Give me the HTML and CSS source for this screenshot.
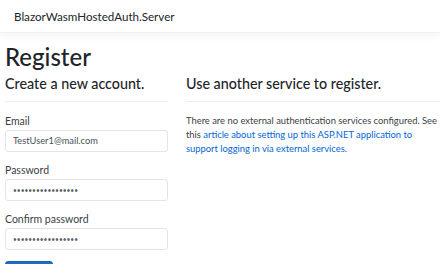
FILE: index.html
```html
<!DOCTYPE html>
<html lang="en">
<head>
    <meta charset="UTF-8">
    <title>Register - BlazorWasmHostedAuth.Server</title>
    <link rel="stylesheet" href="styles.css">
</head>
<body>
    <header class="navbar">
        <a class="navbar-brand" href="#">BlazorWasmHostedAuth.Server</a>
    </header>

    <main class="page">
        <h1>Register</h1>
        <div class="row">
            <!-- Local account form -->
            <section class="col-form">
                <h4>Create a new account.</h4>
                <hr>
                <form>
                    <div class="form-group">
                        <label for="email">Email</label>
                        <input id="email" class="form-control" type="email" value="TestUser1@mail.com">
                    </div>
                    <div class="form-group">
                        <label for="password">Password</label>
                        <input id="password" class="form-control secret" type="password" value="Password123!abcde">
                    </div>
                    <div class="form-group">
                        <label for="confirm">Confirm password</label>
                        <input id="confirm" class="form-control secret" type="password" value="Password123!abcde">
                    </div>
                    <button type="submit" class="btn-primary">Register</button>
                </form>
            </section>

            <!-- External logins -->
            <section class="col-ext">
                <h4>Use another service to register.</h4>
                <hr>
                <p>
                    There are no external authentication services configured. See this
                    <a href="#">article about setting up this ASP.NET application to support logging in via external services</a>.
                </p>
            </section>
        </div>
    </main>
</body>
</html>
```

FILE: styles.css
```css
body {
    margin: 0;
    font-family: Lato, "Open Sans", sans-serif;
    color: #212529;
    background: #fff;
}

.navbar {
    height: 32px;
    display: flex;
    align-items: center;
    padding-left: 14px;
    border-bottom: 1px solid #f1f1f1;
    box-shadow: 0 3px 8px rgba(0, 0, 0, 0.05);
}

.navbar-brand {
    font-size: 11.6px;
    color: #212529;
    text-decoration: none;
}

.page {
    padding: 0 0 0 5px;
    overflow: hidden;
}

h1 {
    font-size: 24px;
    font-weight: 500;
    margin: 10px 0 3px;
    line-height: 1.2;
}

.row {
    display: flex;
    gap: 18px;
}

.col-form {
    width: 163px;
    flex-shrink: 0;
}

.col-ext {
    flex: 1;
}

h4 {
    font-size: 14.3px;
    font-weight: 500;
    margin: 0;
    line-height: 1.2;
}

hr {
    border: 0;
    border-top: 1px solid #eceeef;
    margin: 9px 0 13px;
}

.form-group {
    margin-bottom: 12px;
}

.form-group:last-of-type {
    margin-bottom: 10px;
}

label {
    display: block;
    font-size: 10.5px;
    line-height: 13px;
    color: #3a3f44;
    margin-bottom: 2px;
}

.form-control {
    display: block;
    box-sizing: border-box;
    width: 100%;
    height: 22px;
    padding: 0 7px;
    font-family: inherit;
    font-size: 9.3px;
    color: #495057;
    border: 1px solid #e2e5e8;
    border-radius: 3px;
    background: #fff;
}

.secret {
    font-size: 6.6px;
    color: #5a6066;
}

.btn-primary {
    font-family: inherit;
    font-size: 10px;
    color: #fff;
    background: #1b6ec2;
    border: 1px solid #1861ac;
    border-radius: 3px;
    width: 48px;
    height: 22px;
    padding: 0;
}

.col-ext p {
    font-size: 9.4px;
    line-height: 14px;
    margin: -1px 0 0;
    color: #3a3f44;
}

.col-ext a {
    color: #0366d6;
    text-decoration: none;
}
```
